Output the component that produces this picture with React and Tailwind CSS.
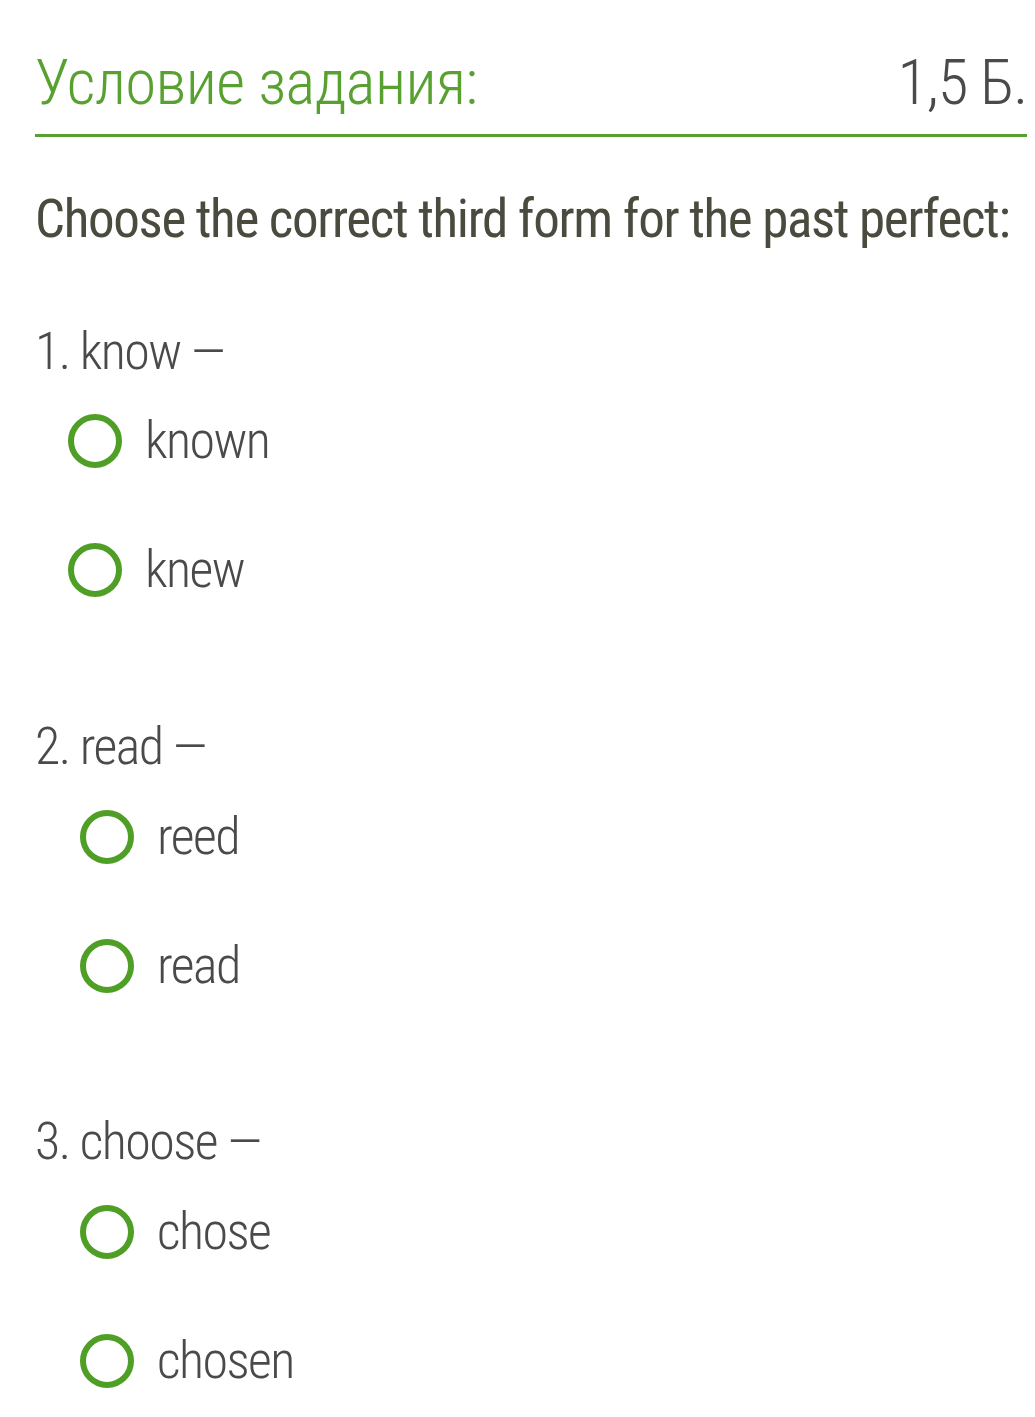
export default function App() {
  const font = { fontFamily: "Roboto, 'Noto Sans', sans-serif" };
  const Option = ({ label, indent, mt }) => (
    <div className={`flex items-center h-[60px] ${indent} ${mt}`}>
      <span className="block w-[54px] h-[54px] rounded-full border-[6px] border-[#4f9e26] box-border shrink-0" />
      <span className="ml-[23px] text-[52px] leading-none font-light tracking-[-0.03em] text-[#4a4a4a] [font-stretch:75%]">{label}</span>
    </div>
  );
  const Head = ({ text, mt }) => (
    <div className={`text-[52px] leading-none font-light tracking-[-0.03em] text-[#4a4a4a] [font-stretch:75%] ${mt}`}>{text}</div>
  );
  return (
    <div className="w-[1035px] h-[1417px] bg-white overflow-hidden pl-[35px] pr-[8px]" style={font}>
      <div className="flex justify-between items-start pt-[51px] pb-[20px] border-b-[3px] border-[#5a9f33]">
        <span className="text-[63px] leading-none font-light tracking-[-0.01em] text-[#58a02f] [font-stretch:75%]">Условие задания:</span>
        <span className="text-[63px] leading-none font-light tracking-[-0.02em] text-[#4a4a4a] [font-stretch:75%]">1,5 Б.</span>
      </div>
      <div className="mt-[56px] text-[53px] leading-none font-[380] tracking-[-0.025em] whitespace-nowrap text-[#4a4a3e] [font-stretch:75%]">
        Choose the correct third form for the past perfect:
      </div>
      <Head text="1. know —" mt="mt-[80px]" />
      <Option label="known" indent="ml-[33px]" mt="mt-[33px]" />
      <Option label="knew" indent="ml-[33px]" mt="mt-[69px]" />
      <Head text="2. read —" mt="mt-[121px]" />
      <Option label="reed" indent="ml-[45px]" mt="mt-[34px]" />
      <Option label="read" indent="ml-[45px]" mt="mt-[69px]" />
      <Head text="3. choose —" mt="mt-[120px]" />
      <Option label="chose" indent="ml-[45px]" mt="mt-[34px]" />
      <Option label="chosen" indent="ml-[45px]" mt="mt-[69px]" />
    </div>
  );
}
